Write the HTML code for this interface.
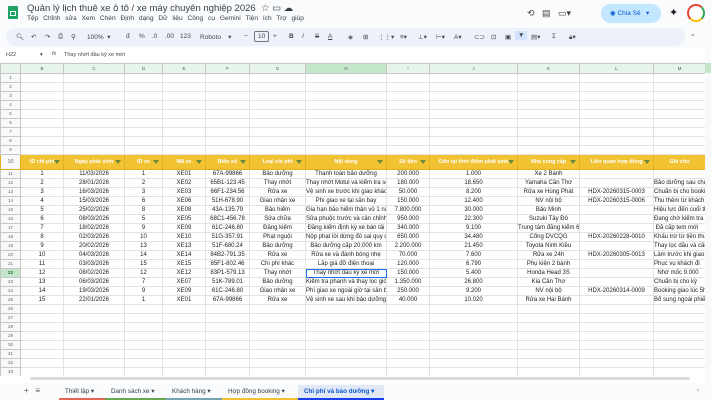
<!DOCTYPE html>
<html><head><meta charset="utf-8"><style>
*{margin:0;padding:0;box-sizing:border-box}
body{width:711px;height:400px;overflow:hidden;background:#f9fbfd;font-family:"Liberation Sans",Arial,sans-serif;position:relative;color:#202124}
.abs{position:absolute}
.title{left:27px;top:3px;font-size:9.5px;color:#3c4043}
.menu{left:27px;top:15px;font-size:6.6px;color:#3c4043;word-spacing:3px}
.tb{left:6px;top:28px;width:338px;height:18px;background:#edf2fa;border-radius:9px 0 0 9px}
.tb2{left:344px;top:28px;width:341px;height:18px;background:#edf2fa;border-radius:0 9px 9px 0}
.t{position:absolute;top:33px;font-size:6.5px;color:#444746}
.fb{left:0;top:48px;width:705px;height:14px;background:#fff;font-size:5.5px;color:#444746}
table{position:absolute;left:0;top:63px;width:705px;border-collapse:collapse;table-layout:fixed;background:#fff}
td{border:0.5px solid #e2e3e3;height:9px;font-size:6px;text-align:center;white-space:nowrap;overflow:hidden;padding:0;line-height:8px;color:#222}
td.rn{background:#f8f9fa;color:#666;font-size:4.5px;border-color:#c7c7c7}
tr.ch td{height:10px;background:#e6f4ea;color:#555;font-size:4.5px;border-color:#c7c7c7}
tr.ch td.sel{background:#c4e7cb}
tr.hd td{height:15px;background:#f1c232;color:#fff;font-weight:bold;font-size:5.4px;position:relative;border-color:#e0b020}
tr.hd td.rn{background:#f8f9fa;color:#666;font-weight:normal}
tr.hd td i{position:absolute;right:3px;top:5px;width:0;height:0;border-left:3px solid transparent;border-right:3px solid transparent;border-top:4px solid #6a8a3a}
.sel22{outline:1px solid #1a73e8;outline-offset:-1px}
</style></head><body>
<div class="abs" style="left:8px;top:6px;width:10px;height:13px;background:#1ea362;border-radius:1px"></div>
<div class="abs" style="left:10px;top:11px;width:6px;height:5px;border:1px solid #fff"></div>
<div class="abs title">Quản lý lịch thuê xe ô tô / xe máy chuyên nghiệp 2026 &nbsp;☆ ▭ ☁</div>
<div class="abs menu">Tệp Chỉnh sửa Xem Chèn Định dạng Dữ liệu Công cụ Gemini Tiện ích Trợ giúp</div>
<div class="abs" style="left:527px;top:8px;font-size:9px;color:#444">⟲ &nbsp;&nbsp;▤ &nbsp;&nbsp;▭▾</div>
<div class="abs" style="left:601px;top:4px;width:60px;height:19px;background:#c2e7ff;border-radius:10px;font-size:6.5px;color:#0b57d0;line-height:19px;padding-left:9px">◉ Chia Sẻ &nbsp;&nbsp;▾</div>
<div class="abs" style="left:669px;top:6px;font-size:11px">✦</div>
<div class="abs" style="left:687px;top:4px;width:18px;height:18px;border-radius:50%;border:2px solid #ea4335;border-right-color:#34a853;border-bottom-color:#fbbc04;background:#fff"></div>
<div class="abs tb"></div><div class="abs tb2"></div>
<span class="t" style="left:16px">🔍︎</span><span class="t" style="left:31px">↶</span><span class="t" style="left:45px">↷</span><span class="t" style="left:58px">⎙</span><span class="t" style="left:71px">⚲</span>
<span class="t" style="left:87px">100% &nbsp;▾</span><span class="t" style="left:126px">đ</span><span class="t" style="left:139px">%</span><span class="t" style="left:152px">.0</span><span class="t" style="left:165px">.00</span><span class="t" style="left:180px">123</span>
<span class="t" style="left:200px">Roboto &nbsp;&nbsp;&nbsp;▾</span><span class="t" style="left:244px">−</span>
<span class="t" style="left:254px;top:31px;border:1px solid #777;padding:1px 3px;border-radius:2px">10</span><span class="t" style="left:273px">+</span>
<span class="t" style="left:289px"><b>B</b></span><span class="t" style="left:302px"><i>I</i></span><span class="t" style="left:315px"><s>S</s></span><span class="t" style="left:328px"><u>A</u></span><span class="t" style="left:348px">◈</span>
<span class="t" style="left:363px">⊞</span><span class="t" style="left:378px">⋮⋮▾</span><span class="t" style="left:400px">≡▾</span><span class="t" style="left:418px">⊥▾</span><span class="t" style="left:436px">⊢▾</span><span class="t" style="left:454px">A▾</span>
<span class="t" style="left:474px">⊂⊃</span><span class="t" style="left:491px">⊡</span><span class="t" style="left:505px">▣</span><span class="t" style="left:515px;top:31px;background:#d3e3fd;padding:1px 3px">▼</span><span class="t" style="left:531px">▤▾</span><span class="t" style="left:552px">Σ</span><span class="t" style="left:569px">🔒︎▾</span>
<span class="t" style="left:690px">⌃</span>
<div class="abs fb"><span class="abs" style="left:6px;top:4px">H22</span><span class="abs" style="left:40px;top:4px">▾</span><span class="abs" style="left:52px;top:3px;font-style:italic">fx</span><span class="abs" style="left:64px;top:4px">Thay nhớt đầu kỳ xe mới</span></div>
<table>
<colgroup><col style="width:20px"><col style="width:43px"><col style="width:61px"><col style="width:38px"><col style="width:43px"><col style="width:44px"><col style="width:56px"><col style="width:81px"><col style="width:43px"><col style="width:88px"><col style="width:62px"><col style="width:74px"><col style="width:52px"></colgroup>
<tr class="ch"><td class="rn"></td><td>B</td><td>C</td><td>D</td><td>E</td><td>F</td><td>G</td><td class="sel">H</td><td>I</td><td>J</td><td>K</td><td>L</td><td>M</td></tr>
<tr><td class="rn">1</td><td></td><td></td><td></td><td></td><td></td><td></td><td></td><td></td><td></td><td></td><td></td><td></td></tr>
<tr><td class="rn">2</td><td></td><td></td><td></td><td></td><td></td><td></td><td></td><td></td><td></td><td></td><td></td><td></td></tr>
<tr><td class="rn">3</td><td></td><td></td><td></td><td></td><td></td><td></td><td></td><td></td><td></td><td></td><td></td><td></td></tr>
<tr><td class="rn">4</td><td></td><td></td><td></td><td></td><td></td><td></td><td></td><td></td><td></td><td></td><td></td><td></td></tr>
<tr><td class="rn">5</td><td></td><td></td><td></td><td></td><td></td><td></td><td></td><td></td><td></td><td></td><td></td><td></td></tr>
<tr><td class="rn">6</td><td></td><td></td><td></td><td></td><td></td><td></td><td></td><td></td><td></td><td></td><td></td><td></td></tr>
<tr><td class="rn">7</td><td></td><td></td><td></td><td></td><td></td><td></td><td></td><td></td><td></td><td></td><td></td><td></td></tr>
<tr><td class="rn">8</td><td></td><td></td><td></td><td></td><td></td><td></td><td></td><td></td><td></td><td></td><td></td><td></td></tr>
<tr><td class="rn">9</td><td></td><td></td><td></td><td></td><td></td><td></td><td></td><td></td><td></td><td></td><td></td><td></td></tr>
<tr class="hd"><td class="rn">10</td><td>ID chi phí<i></i></td><td>Ngày phát sinh<i></i></td><td>ID xe<i></i></td><td>Mã xe<i></i></td><td>Biển số<i></i></td><td>Loại chi phí<i></i></td><td>Nội dung<i></i></td><td>Số tiền<i></i></td><td>Odo tại thời điểm phát sinh<i></i></td><td>Nhà cung cấp<i></i></td><td>Liên quan hợp đồng<i></i></td><td>Ghi chú</td></tr>
<tr><td class="rn">11</td><td>1</td><td>11/03/2026</td><td>1</td><td>XE01</td><td>67A-99866</td><td>Bảo dưỡng</td><td>Thanh toán bảo dưỡng</td><td>200.000</td><td>1.000</td><td>Xe 2 Bánh</td><td></td><td></td></tr>
<tr><td class="rn">12</td><td>2</td><td>28/01/2026</td><td>2</td><td>XE02</td><td>65B1-123.45</td><td>Thay nhớt</td><td>Thay nhớt Motul và kiểm tra sên</td><td>180.000</td><td>18.650</td><td>Yamaha Cần Thơ</td><td></td><td style="text-align:left">Bảo dưỡng sau chuyến</td></tr>
<tr><td class="rn">13</td><td>3</td><td>16/03/2026</td><td>3</td><td>XE03</td><td>66F1-234.56</td><td>Rửa xe</td><td>Vệ sinh xe trước khi giao khách</td><td>50.000</td><td>8.200</td><td>Rửa xe Hùng Phát</td><td>HDX-20260315-0003</td><td>Chuẩn bị cho booking</td></tr>
<tr><td class="rn">14</td><td>4</td><td>15/03/2026</td><td>6</td><td>XE06</td><td>51H-678.90</td><td>Giao nhận xe</td><td>Phí giao xe tại sân bay</td><td>150.000</td><td>12.400</td><td>NV nội bộ</td><td>HDX-20260315-0006</td><td style="text-align:left">Thu thêm từ khách</td></tr>
<tr><td class="rn">15</td><td>5</td><td>25/02/2026</td><td>8</td><td>XE08</td><td>43A-135.79</td><td>Bảo hiểm</td><td>Gia hạn bảo hiểm thân vỏ 1 năm</td><td>7.800.000</td><td>30.000</td><td>Bảo Minh</td><td></td><td style="text-align:left">Hiệu lực đến cuối tháng</td></tr>
<tr><td class="rn">16</td><td>6</td><td>08/03/2026</td><td>5</td><td>XE05</td><td>68C1-456.78</td><td>Sửa chữa</td><td>Sửa phuộc trước và cân chỉnh tay lái</td><td>950.000</td><td>22.300</td><td>Suzuki Tây Đô</td><td></td><td style="text-align:left">Đang chờ kiểm tra lại</td></tr>
<tr><td class="rn">17</td><td>7</td><td>18/02/2026</td><td>9</td><td>XE09</td><td>61C-246.80</td><td>Đăng kiểm</td><td>Đăng kiểm định kỳ xe bán tải</td><td>340.000</td><td>9.100</td><td>Trung tâm đăng kiểm 6501S</td><td></td><td style="text-align:left">&nbsp;Đã cấp tem mới</td></tr>
<tr><td class="rn">18</td><td>8</td><td>02/03/2026</td><td>10</td><td>XE10</td><td>51G-357.91</td><td>Phạt nguội</td><td>Nộp phạt lỗi dừng đỗ sai quy định</td><td>650.000</td><td>34.480</td><td>Cổng DVCQG</td><td>HDX-20260228-0010</td><td>Khấu trừ từ tiền thuê</td></tr>
<tr><td class="rn">19</td><td>9</td><td>20/02/2026</td><td>13</td><td>XE13</td><td>51F-680.24</td><td>Bảo dưỡng</td><td>Bảo dưỡng cấp 20.000 km</td><td>2.200.000</td><td>21.450</td><td>Toyota Ninh Kiều</td><td></td><td style="text-align:left">Thay lọc dầu và cân</td></tr>
<tr><td class="rn">20</td><td>10</td><td>04/03/2026</td><td>14</td><td>XE14</td><td>84B2-791.35</td><td>Rửa xe</td><td>Rửa xe và đánh bóng nhẹ</td><td>70.000</td><td>7.600</td><td>Rửa xe 24h</td><td>HDX-20260305-0013</td><td style="text-align:left">Làm trước khi giao</td></tr>
<tr><td class="rn">21</td><td>11</td><td>03/03/2026</td><td>15</td><td>XE15</td><td>85F1-802.46</td><td>Chi phí khác</td><td>Lắp giá đỡ điện thoại</td><td>120.000</td><td>6.790</td><td>Phụ kiện 2 bánh</td><td></td><td style="text-align:left">Phục vụ khách đi</td></tr>
<tr><td class="rn" style="background:#c4e7cb;color:#1e5e2e;font-weight:bold">22</td><td>12</td><td>08/02/2026</td><td>12</td><td>XE12</td><td>83P1-579.13</td><td>Thay nhớt</td><td class="sel22">Thay nhớt đầu kỳ xe mới</td><td>150.000</td><td>5.400</td><td>Honda Head 3S</td><td></td><td style="text-align:left">&nbsp;&nbsp;Nhớ mốc 9.000</td></tr>
<tr><td class="rn">23</td><td>13</td><td>06/03/2026</td><td>7</td><td>XE07</td><td>51K-789.01</td><td>Bảo dưỡng</td><td>Kiểm tra phanh và thay lọc gió điều hòa</td><td>1.350.000</td><td>26.800</td><td>Kia Cần Thơ</td><td></td><td style="text-align:left">Chuẩn bị cho kỳ</td></tr>
<tr><td class="rn">24</td><td>14</td><td>19/03/2026</td><td>9</td><td>XE09</td><td>61C-246.80</td><td>Giao nhận xe</td><td>Phí giao xe ngoài giờ tại sân bay</td><td>250.000</td><td>9.200</td><td>NV nội bộ</td><td>HDX-20260314-0009</td><td style="text-align:left">Booking giao lúc 5h</td></tr>
<tr><td class="rn">25</td><td>15</td><td>22/01/2026</td><td>1</td><td>XE01</td><td>67A-99866</td><td>Rửa xe</td><td>Vệ sinh xe sau khi bảo dưỡng</td><td>40.000</td><td>10.020</td><td>Rửa xe Hai Bánh</td><td></td><td style="text-align:left">Bổ sung ngoài phiếu</td></tr>
<tr><td class="rn">26</td><td></td><td></td><td></td><td></td><td></td><td></td><td></td><td></td><td></td><td></td><td></td><td></td></tr>
<tr><td class="rn">27</td><td></td><td></td><td></td><td></td><td></td><td></td><td></td><td></td><td></td><td></td><td></td><td></td></tr>
<tr><td class="rn">28</td><td></td><td></td><td></td><td></td><td></td><td></td><td></td><td></td><td></td><td></td><td></td><td></td></tr>
<tr><td class="rn">29</td><td></td><td></td><td></td><td></td><td></td><td></td><td></td><td></td><td></td><td></td><td></td><td></td></tr>
<tr><td class="rn">30</td><td></td><td></td><td></td><td></td><td></td><td></td><td></td><td></td><td></td><td></td><td></td><td></td></tr>
<tr><td class="rn">31</td><td></td><td></td><td></td><td></td><td></td><td></td><td></td><td></td><td></td><td></td><td></td><td></td></tr>
<tr><td class="rn">32</td><td></td><td></td><td></td><td></td><td></td><td></td><td></td><td></td><td></td><td></td><td></td><td></td></tr>
<tr><td class="rn">33</td><td></td><td></td><td></td><td></td><td></td><td></td><td></td><td></td><td></td><td></td><td></td><td></td></tr>
</table>
<div class="abs" style="left:0;top:376px;width:711px;height:7px;background:#fff"></div>
<div class="abs" style="left:30px;top:377px;width:660px;height:3px;background:#dadce0;border-radius:2px"></div>
<div class="abs" style="left:705px;top:63px;width:6px;height:320px;background:#f8f9fa"></div>
<div class="abs" style="left:705px;top:63px;width:6px;height:10px;background:#c4e7cb"></div>
<div class="abs" style="left:0;top:383px;width:711px;height:17px;background:#f9fbfd"></div>
<div class="abs" style="left:24px;top:386px;font-size:8px;color:#555">+ &nbsp;&nbsp;≡</div>
<div class="abs" style="left:59px;top:385px;width:46px;height:15px;border-bottom:2px solid #e06655;font-size:6.3px;color:#3c4043;line-height:13px;padding-left:6px">Thiết lập ▾</div>
<div class="abs" style="left:105px;top:385px;width:61px;height:15px;border-bottom:2px solid #6aa84f;font-size:6.3px;color:#3c4043;line-height:13px;padding-left:6px">Danh sách xe ▾</div>
<div class="abs" style="left:166px;top:385px;width:56px;height:15px;border-bottom:2px solid #76a5af;font-size:6.3px;color:#3c4043;line-height:13px;padding-left:6px">Khách hàng ▾</div>
<div class="abs" style="left:222px;top:385px;width:76px;height:15px;border-bottom:2px solid #f1c232;font-size:6.3px;color:#3c4043;line-height:13px;padding-left:6px">Hợp đồng booking ▾</div>
<div class="abs" style="left:298px;top:385px;width:86px;height:15px;border-bottom:2px solid #1a3ef0;background:#e1e9f7;font-size:6.3px;color:#0b57d0;font-weight:bold;line-height:13px;padding-left:6px">Chi phí và bảo dưỡng ▾</div>
<div class="abs" style="left:697px;top:388px;font-size:6px;color:#666">‹</div>
</body></html>
